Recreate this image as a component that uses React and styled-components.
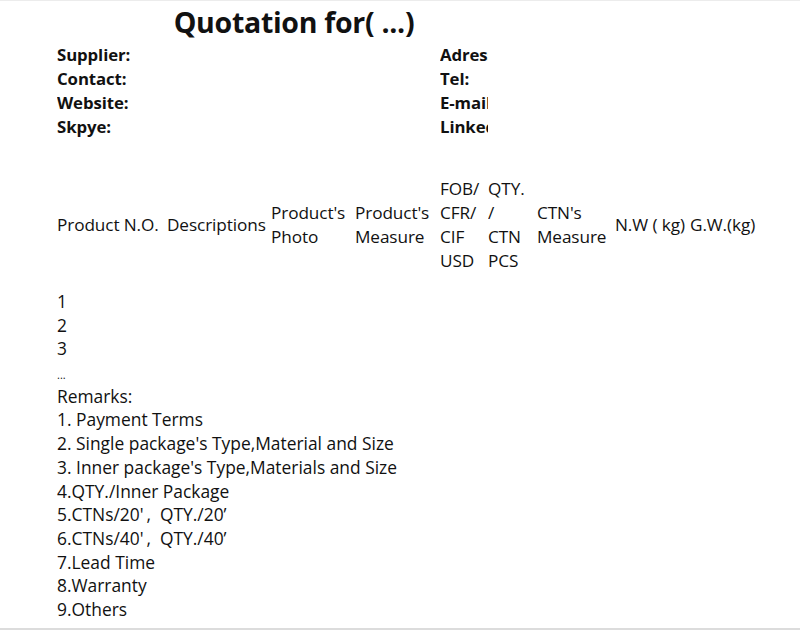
import React from "react";
import styled, { createGlobalStyle } from "styled-components";

const Global = createGlobalStyle`
  html, body {
    margin: 0;
    padding: 0;
    background: #fff;
    font-family: "Open Sans", "Noto Sans", "Liberation Sans", sans-serif;
    color: #111;
  }
`;

const Page = styled.div`
  width: 800px;
  height: 630px;
  box-sizing: border-box;
  padding-left: 57px;
  border-top: 1px solid #ececec;
  border-bottom: 2px solid #dcdcdc;
  overflow: hidden;
`;

const Title = styled.div`
  width: 474px;
  text-align: center;
  font-size: 28.5px;
  font-weight: 700;
  line-height: 42px;
  height: 42px;
  letter-spacing: -0.3px;
`;

const Info = styled.div`
  display: grid;
  grid-template-columns: 383px 48px;
  grid-auto-rows: 24px;
  font-size: 16.8px;
  font-weight: 700;
  line-height: 24px;
  letter-spacing: -0.1px;
`;

const Label = styled.div`
  white-space: nowrap;
  overflow: hidden;
`;

const cols = "110px 104px 84px 85px 48px 49px 78px 75px 80px";

const Header = styled.div`
  display: grid;
  grid-template-columns: ${cols};
  margin-top: 38px;
  height: 96px;
  align-items: center;
  font-size: 17.2px;
  line-height: 24px;
  letter-spacing: -0.1px;
`;

const HeadCell = styled.div`
  white-space: nowrap;
  overflow: hidden;
`;

const Lines = styled.div`
  margin-top: 17px;
  font-size: 17.4px;
  line-height: 23.7px;
`;

const Line = styled.div`
  white-space: pre;
  height: 23.7px;
`;

const Dots = styled(Line)`
  font-size: 11px;
  line-height: 28px;
`;

const headers = [
  ["Product N.O."],
  ["Descriptions"],
  ["Product's", "Photo"],
  ["Product's", "Measure"],
  ["FOB/", "CFR/", "CIF", "USD"],
  ["QTY.", "/", "CTN", "PCS"],
  ["CTN's", "Measure"],
  ["N.W ( kg)"],
  ["G.W.(kg)"],
];

const remarks = [
  "Remarks:",
  "1. Payment Terms",
  "2. Single package's Type,Material and Size",
  "3. Inner package's Type,Materials and Size",
  "4.QTY./Inner Package",
  "5.CTNs/20'\u2009,  QTY./20\u2019",
  "6.CTNs/40'\u2009,  QTY./40\u2019",
  "7.Lead Time",
  "8.Warranty",
  "9.Others",
];

export default function App() {
  return (
    <>
      <Global />
      <Page>
        <Title>Quotation for( ...)</Title>
        <Info>
          <Label>Supplier:</Label>
          <Label>Adress:</Label>
          <Label>Contact:</Label>
          <Label>Tel:</Label>
          <Label>Website:</Label>
          <Label>E-mail:</Label>
          <Label>Skpye:</Label>
          <Label>Linkedin:</Label>
        </Info>
        <Header>
          {headers.map((h, i) => (
            <HeadCell key={i}>
              {h.map((t, j) => (
                <div key={j}>{t}</div>
              ))}
            </HeadCell>
          ))}
        </Header>
        <Lines>
          <Line>1</Line>
          <Line>2</Line>
          <Line>3</Line>
          <Dots>...</Dots>
          {remarks.map((r) => (
            <Line key={r}>{r}</Line>
          ))}
        </Lines>
      </Page>
    </>
  );
}
